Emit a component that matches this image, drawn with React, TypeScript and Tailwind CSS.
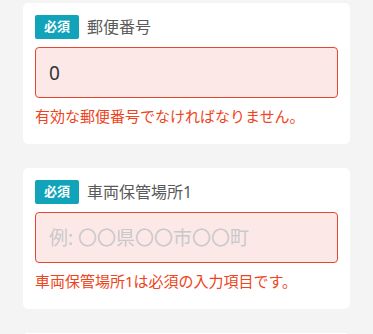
export default function App() {
  const font = { fontFamily: '"Noto Sans", "Noto Sans CJK JP", sans-serif' };

  return (
    <main className="min-h-screen bg-[#f4f4f4] pt-[3px] pl-[23px]" style={font}>
      <div className="w-[327px] flex flex-col gap-[24px]">
        <Field label="郵便番号" value="0" error="有効な郵便番号でなければなりません。" />
        <Field
          label="車両保管場所1"
          placeholder="例: 〇〇県〇〇市〇〇町"
          error="車両保管場所1は必須の入力項目です。"
        />
        <div className="h-[20px] bg-white rounded-[5px]" />
      </div>
    </main>
  );
}

function Field({
  label,
  value,
  placeholder,
  error,
}: {
  label: string;
  value?: string;
  placeholder?: string;
  error: string;
}) {
  return (
    <div className="bg-white rounded-[5px] px-[12px] pt-[12px] pb-[18px]">
      <div className="flex items-center gap-2 h-[24px]">
        <span className="bg-[#10a3b9] text-white text-[13px] font-bold rounded-[2px] w-[44px] h-[24px] flex items-center justify-center">
          必須
        </span>
        <span className="text-[16px] text-[#5a5a5a]">{label}</span>
      </div>
      <input
        className="mt-[8px] w-full h-[51px] rounded-[4px] border border-[#e5462f] bg-[#fde8e8] px-[13px] text-[19px] text-[#333] placeholder:text-[#c9c9c9] outline-none"
        defaultValue={value}
        placeholder={placeholder}
      />
      <p className="mt-[8px] text-[15px] leading-[20px] text-[#ee4420]">{error}</p>
    </div>
  );
}
